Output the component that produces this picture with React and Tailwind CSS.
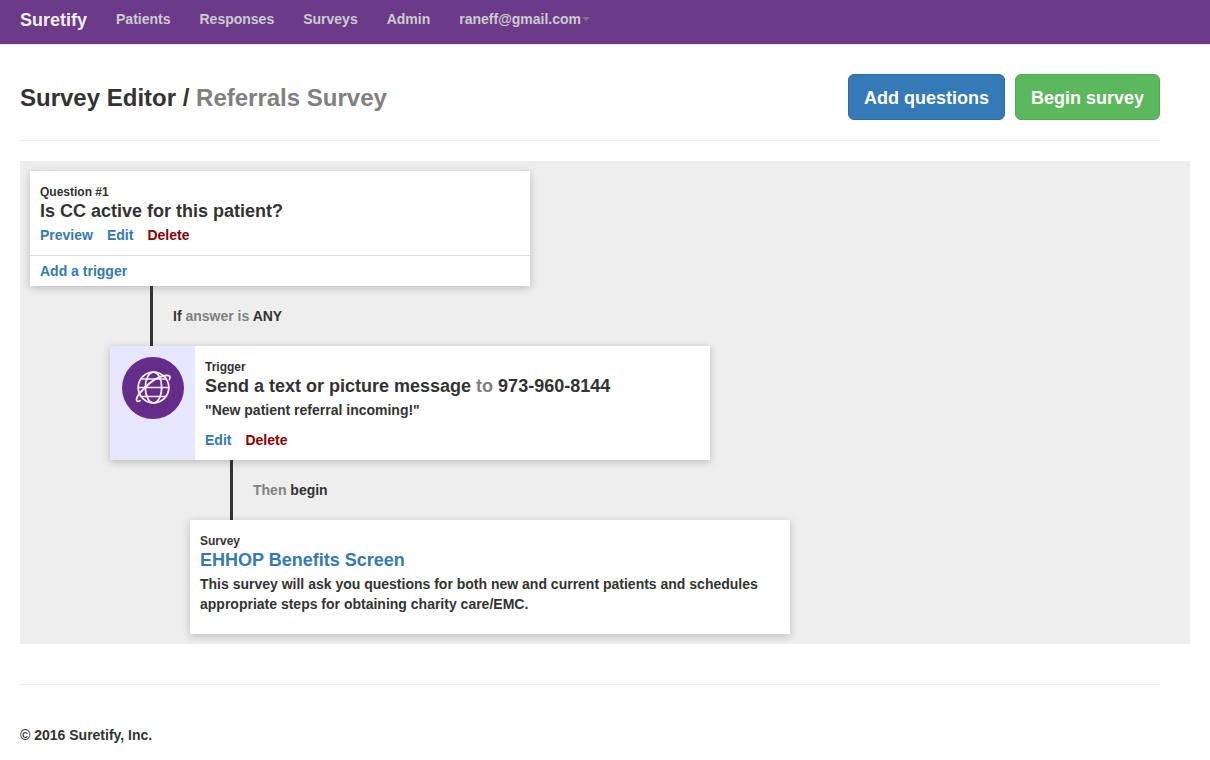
const NAV_ITEMS = ['Patients', 'Responses', 'Surveys', 'Admin'];

function GlobeIcon() {
  return (
    <svg viewBox="0 0 62 62" className="block size-[62px]" fill="none" aria-hidden="true">
      <circle cx="31" cy="31" r="31" fill="#652d8a" />
      <g stroke="#f3eef8" strokeWidth="1.8" strokeLinecap="round">
        <circle cx="31.5" cy="30.5" r="15.3" />
        <ellipse cx="31.500" cy="30.500" rx="8.200" ry="15.300" />
        <path d="M18.500 22H44.500M16.200 30.500H46.800M18.500 39.500H44.500" strokeWidth="1.6" />
        <path d="M47.500 22.500C48.800 19.300 47.500 18.200 44 18.500C37.500 19 29.500 24 23 30.500C17.500 36 13.500 41.500 14.800 43.700C15.400 44.600 16.800 44.500 18 43.800" />
      </g>
    </svg>
  );
}

function Card({ className = '', children }) {
  return (
    <section className={`bg-white shadow-[0_2px_8px_rgba(0,0,0,0.22)] ${className}`}>
      {children}
    </section>
  );
}

function CardLabel({ children }) {
  return <p className="pt-[2px] text-[12px] leading-[18px]">{children}</p>;
}

function Connector({ className, children }) {
  return (
    <div className={`flex h-15 items-center border-l-3 border-[#333] pl-5 ${className}`}>
      <p>{children}</p>
    </div>
  );
}

function TextLink({ danger = false, children }) {
  return (
    <a href="#" className={danger ? 'text-[#8b0000] hover:underline' : 'text-[#337ab7] hover:underline'}>
      {children}
    </a>
  );
}

export default function App() {
  return (
    <div className="bg-white font-['Liberation_Sans',Arial,sans-serif] text-[14px] leading-5 font-bold text-[#333]">
      <nav className="flex h-[45px] items-center gap-[29px] border-b border-[#e7e7e7] bg-[#6b3b8a] px-5 pb-[6px] text-[#ccc]">
        <a href="#" className="pt-[2px] text-[18px] text-[#eee]">Suretify</a>
        {NAV_ITEMS.map((item) => (
          <a key={item} href="#" className="hover:text-white">{item}</a>
        ))}
        <button type="button" className="flex items-center gap-px hover:text-white">
          raneff@gmail.com
          <svg viewBox="0 0 8 4" className="h-1 w-2" aria-hidden="true">
            <path d="M0 0H8L4 4Z" fill="#777" />
          </svg>
        </button>
      </nav>

      <main className="px-5">
        <header className="mr-[30px] flex items-center justify-between border-b border-[#eee] pt-[29px] pb-5">
          <h1 className="pt-[2px] text-[24px] leading-7">
            Survey Editor / <span className="text-[#808080]">Referrals Survey</span>
          </h1>
          <div className="flex gap-[10px] text-[18px] leading-6 text-white">
            <button type="button" className="rounded-md border border-[#2e6da4] bg-[#337ab7] px-[15px] pt-[11px] pb-[9px]">
              Add questions
            </button>
            <button type="button" className="rounded-md border border-[#4cae4c] bg-[#5cb85c] px-[15px] pt-[11px] pb-[9px]">
              Begin survey
            </button>
          </div>
        </header>

        <div className="mt-5 bg-[#eee] p-[10px]">
          <Card className="max-w-[500px]">
            <div className="border-b border-[#ddd] p-[10px]">
              <CardLabel>Question #1</CardLabel>
              <h2 className="text-[18px]">Is CC active for this patient?</h2>
              <div className="mt-1 flex gap-[14px]">
                <TextLink>Preview</TextLink>
                <TextLink>Edit</TextLink>
                <TextLink danger>Delete</TextLink>
              </div>
            </div>
            <div className="px-[10px] py-[5px]">
              <TextLink>Add a trigger</TextLink>
            </div>
          </Card>

          <Connector className="ml-[120px]">
            If <span className="text-[#808080]">answer is</span> ANY
          </Connector>

          <Card className="ml-20 flex max-w-[600px]">
            <div className="flex w-[85px] shrink-0 justify-center bg-[#e6e6ff] pt-[11px]">
              <GlobeIcon />
            </div>
            <div className="p-[10px]">
              <CardLabel>Trigger</CardLabel>
              <h2 className="text-[18px]">
                Send a text or picture message <span className="text-[#808080]">to</span> 973-960-8144
              </h2>
              <p className="mt-1">"New patient referral incoming!"</p>
              <div className="mt-[10px] flex gap-[14px]">
                <TextLink>Edit</TextLink>
                <TextLink danger>Delete</TextLink>
              </div>
            </div>
          </Card>

          <Connector className="ml-[200px]">
            <span className="text-[#808080]">Then</span> begin
          </Connector>

          <Card className="ml-40 max-w-[600px] px-[10px] pt-[10px] pb-5">
            <CardLabel>Survey</CardLabel>
            <h2 className="text-[18px]">
              <TextLink>EHHOP Benefits Screen</TextLink>
            </h2>
            <p className="mt-1">
              This survey will ask you questions for both new and current patients and schedules
              appropriate steps for obtaining charity care/EMC.
            </p>
          </Card>
        </div>
      </main>

      <footer className="mt-10 mr-[50px] ml-5 border-t border-[#eee] py-10">
        <p>© 2016 Suretify, Inc.</p>
      </footer>
    </div>
  );
}
